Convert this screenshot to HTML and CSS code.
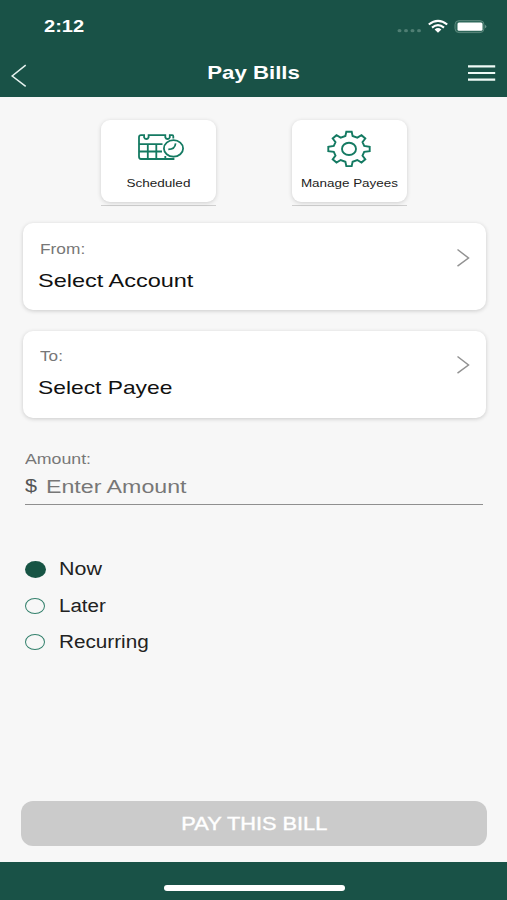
FILE: index.html
```html
<!DOCTYPE html>
<html lang="en">
<head>
<meta charset="utf-8">
<title>Pay Bills</title>
<link rel="stylesheet" href="styles.css">
</head>
<body>
<div class="screen">
  <header class="header">
    <div class="status">
      <span class="wide time">2:12</span>
      <svg class="indicators" width="92" height="20" viewBox="0 0 92 20">
        <g fill="#4f7e73"><ellipse cx="4.5" cy="13.7" rx="2" ry="1.6"/><ellipse cx="11" cy="13.7" rx="2" ry="1.6"/><ellipse cx="17.5" cy="13.7" rx="2" ry="1.6"/><ellipse cx="24" cy="13.7" rx="2" ry="1.6"/></g>
        <g fill="none" stroke="#fff" stroke-width="2.2"><path d="M33.8 7.5Q43 .2 52.2 7.5"/><path d="M37 10.6Q43 5.8 49 10.6"/></g>
        <path d="M39.6 12.5Q43 9.7 46.4 12.5L43 15.7Z" fill="#fff"/>
        <rect x="60" y="3.6" width="29" height="12" rx="4" fill="#2d6659" stroke="#5a877c"/>
        <rect x="62.5" y="5.5" width="25" height="8.2" rx="1.5" fill="#fff"/>
        <path d="M90.3 7.7q2 1.8 0 3.6z" fill="#8fb0a8"/>
      </svg>
    </div>
    <nav class="nav">
      <svg class="back" width="18" height="26" viewBox="0 0 18 26"><path d="M15.7 2.2L2.2 13L15.7 23.4" fill="none" stroke="#e6f2ef" stroke-width="1.5"/></svg>
      <h1 class="wide title">Pay Bills</h1>
      <svg class="menu" width="28" height="18" viewBox="0 0 28 18"><path d="M0 2.3H27.2M0 9H27.2M0 15.7H27.2" stroke="#eefaf6" stroke-width="2.2"/></svg>
    </nav>
  </header>

  <main class="content">
    <div class="tiles">
      <div class="tile">
        <svg width="50" height="38" viewBox="-1 0 50 38" fill="none" stroke="#147a62" stroke-width="1.8">
          <path d="M38.3 8.6V6.2Q38.3 5.2 37.3 5.2H34.8V7.3Q34 9 32.5 9Q31 9 30.3 7.3V5.2H13.6V7.3Q12.9 9 11.4 9Q9.9 9 9.1 7.3V5.2H6Q4 5.2 4 7.2V26.5Q4 29 6 29H38.5V27.8"/>
          <path d="M4 14.2H27.5M4 21.5H27M12.8 14.2V29M21.3 14.2V29M30.3 26V29"/>
          <ellipse cx="38.5" cy="18.4" rx="9.6" ry="8.2"/>
          <path d="M40.6 13.3Q40 19.3 33.3 19.3" stroke-width="1.7"/>
        </svg>
        <span class="wide tile-label scheduled">Scheduled</span>
      </div>
      <div class="tile">
        <svg width="50" height="38" viewBox="1 .5 50 38" fill="none" stroke="#147a62" stroke-width="1.9">
          <path d="M22.3 2.3H27.7L28.6 6.5L33.3 8.1L37.5 5.7L41.3 9L38.5 12.6L40.2 16.4L45.7 17.2V21.6L40.2 22.4L38.5 26.2L41.3 29.8L37.5 33L33.3 30.5L28.6 32.3L27.7 36.6H22.3L21.4 32.3L16.7 30.5L12.5 33L8.7 29.8L11.5 26.2L9.8 22.4L4.3 21.6V17.2L9.8 16.4L11.5 12.6L8.7 9L12.5 5.7L16.7 8.1L21.4 6.5Z"/>
          <ellipse cx="25" cy="19.4" rx="7" ry="6.1"/>
        </svg>
        <span class="wide tile-label manage">Manage Payees</span>
      </div>
    </div>

    <section class="card">
      <div class="card-text">
        <span class="wide label from">From:</span>
        <span class="wide value account">Select Account</span>
      </div>
      <svg class="chevron" width="14" height="20" viewBox="0 0 14 20"><path d="M1.5 1.5L12.5 10L1.5 18.2" fill="none" stroke="#929292" stroke-width="1.5"/></svg>
    </section>
    <section class="card">
      <div class="card-text">
        <span class="wide label to">To:</span>
        <span class="wide value payee">Select Payee</span>
      </div>
      <svg class="chevron" width="14" height="20" viewBox="0 0 14 20"><path d="M1.5 1.5L12.5 10L1.5 18.2" fill="none" stroke="#929292" stroke-width="1.5"/></svg>
    </section>

    <section class="amount">
      <span class="wide label amount-label">Amount:</span>
      <div class="amount-row">
        <span class="wide dollar">$</span>
        <span class="wide placeholder">Enter Amount</span>
      </div>
    </section>

    <div class="options">
      <div class="option"><span class="radio selected"></span><span class="wide option-label now">Now</span></div>
      <div class="option"><span class="radio"></span><span class="wide option-label later">Later</span></div>
      <div class="option"><span class="radio"></span><span class="wide option-label recurring">Recurring</span></div>
    </div>

    <div class="pay"><span class="wide pay-label">PAY THIS BILL</span></div>
  </main>

  <footer class="footer"><div class="home"></div></footer>
</div>
</body>
</html>
```

FILE: styles.css
```css
* { box-sizing: border-box; }
body {
  margin: 0;
  font-family: "Liberation Sans", Arial, sans-serif;
  background: #f7f7f7;
}
svg { display: block; }
.screen {
  width: 507px;
  height: 900px;
  display: flex;
  flex-direction: column;
  overflow: hidden;
}
/* Extended letterforms: each label is widened from its left edge. */
.wide {
  display: block;
  width: max-content;
  white-space: nowrap;
  transform: scaleX(1.21);
  transform-origin: 0 50%;
}
.header { height: 97px; background: #195247; color: #fff; }
.status {
  height: 54px;
  padding: 17px 20px 0 44px;
  display: flex;
  justify-content: space-between;
}
.time { font-size: 17px; line-height: 20px; font-weight: 700; transform: scaleX(1.18); }
.nav {
  height: 43px;
  padding: 0 11px 0 10px;
  display: grid;
  grid-template-columns: 30px 1fr 28px;
  justify-items: center;
  align-items: start;
}
.back { margin-top: 9px; justify-self: start; }
.title {
  margin: 8px 0 0;
  font-size: 18.5px;
  line-height: 22px;
  font-weight: 700;
  transform: scaleX(1.2);
  transform-origin: 50% 50%;
}
.menu { margin-top: 10px; }
.content {
  height: 765px;
  padding: 23px 20px 0 21px;
  display: flex;
  flex-direction: column;
}
.tiles { display: flex; gap: 76px; padding-left: 80px; }
.tile {
  position: relative;
  z-index: 0;
  width: 115px;
  height: 86px;
  padding-top: 10px;
  display: flex;
  flex-direction: column;
  align-items: center;
  border-bottom: 1.5px solid #cfcfcf;
}
.tile::before {
  content: "";
  position: absolute;
  inset: 0 0 3px;
  z-index: -1;
  border-radius: 9px;
  background: #fff;
  box-shadow: 0 1px 4px rgba(0,0,0,.17);
}
.tile-label {
  margin-top: 8px;
  font-size: 11.2px;
  line-height: 14px;
  color: #222;
  transform-origin: 50% 50%;
}
.manage { transform: scaleX(1.2); }
.card {
  margin: 17px 1px 0 2px;
  height: 87px;
  padding: 16px 16px 0 16px;
  display: flex;
  justify-content: space-between;
  border-radius: 10px;
  background: #fff;
  box-shadow: 0 1px 4px rgba(0,0,0,.18);
}
.card + .card { margin-top: 20.5px; }
.label { font-size: 14.2px; line-height: 18px; color: #777; }
.card .label { margin-left: 1px; }
.value { margin-top: 12px; font-size: 19px; line-height: 22px; color: #111; margin-left: -1px; }
.from { transform: translateY(.5px) scaleX(1.22); }
.account { transform: translateY(.5px) scaleX(1.236); }
.payee { transform: scaleX(1.2); }
.chevron { margin-top: 9px; }
.card + .card .chevron { margin-top: 8.5px; }
.amount {
  margin: 32.5px 4px 0 4px;
  height: 55px;
  border-bottom: 1.5px solid #8f8f8f;
}
.amount-label { transform: scaleX(1.25); }
.amount-row { display: flex; margin-top: 7px; font-size: 18.8px; line-height: 22px; color: #777; }
.dollar { width: 20.5px; color: #555; transform: scaleX(1.15); }
.placeholder { transform: translateY(.5px) scaleX(1.235); }
.options { margin: 45.8px 0 0 4px; }
.option { height: 36.6px; display: flex; align-items: center; }
.radio {
  width: 20px;
  height: 16px;
  margin-right: 14px;
  border: 1.5px solid #33806c;
  border-radius: 50%;
}
.radio.selected { width: 21px; height: 17px; margin-right: 13px; border: 0; background: #175444; }
.option-label { font-size: 18px; line-height: 22px; color: #222; }
.now { transform: scaleX(1.19); }
.later { transform: scaleX(1.14); }
.recurring { transform: scaleX(1.15); }
.pay {
  margin: auto 0 16.5px;
  height: 44.5px;
  display: flex;
  align-items: center;
  justify-content: center;
  border-radius: 12px;
  background: #cbcbcb;
}
.pay-label {
  font-size: 18.3px;
  line-height: 22px;
  color: #fff;
  -webkit-text-stroke: .4px #fff;
  transform: translateY(1px) scaleX(1.19);
  transform-origin: 50% 50%;
}
.footer { height: 38px; background: #195247; padding-top: 23px; }
.home { width: 181px; height: 6px; margin: 0 0 0 164px; border-radius: 3px; background: #fff; }
```
